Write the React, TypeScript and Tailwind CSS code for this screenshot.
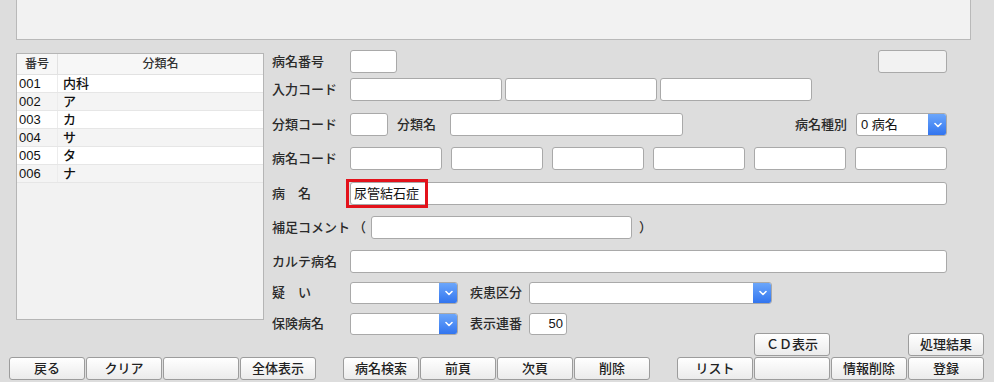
import React from 'react';

const FONT = '"Liberation Sans", "Noto Sans CJK JP", sans-serif';

function Field({ className = '', children }: { className?: string; children?: React.ReactNode }) {
    return (
        <div className={`h-[23px] bg-white border border-[#a9a9a9] rounded-[3px] flex items-center text-[13px] text-[#111] ${className}`}>
            {children}
        </div>
    );
}

function Select({ className = '', value = '' }: { className?: string; value?: string }) {
    return (
        <div className={`h-[23px] flex border border-[#a9a9a9] rounded-[3px] bg-white overflow-hidden ${className}`}>
            <div className="flex-1 flex items-center pl-[4px] text-[13px] text-[#111]">{value}</div>
            <div className="w-[19px] -my-px -mr-px rounded-r-[3px] bg-gradient-to-b from-[#6ea8fb] to-[#2f72ee] flex items-center justify-center">
                <svg width="8" height="6" viewBox="0 0 8 6" fill="none">
                    <path d="M1 1.5 L4 4.5 L7 1.5" stroke="white" strokeWidth="1.6" strokeLinecap="round" strokeLinejoin="round" />
                </svg>
            </div>
        </div>
    );
}

function Label({ className = '', children }: { className?: string; children: React.ReactNode }) {
    return <div className={`text-[13px] font-medium text-[#2a2a2a] whitespace-nowrap ${className}`}>{children}</div>;
}

function Btn({ children }: { children?: React.ReactNode }) {
    return (
        <button className="w-[76px] h-[23px] rounded-[3px] border border-[#9c9c9c] bg-gradient-to-b from-white to-[#ebebeb] text-[13px] font-medium text-[#222] flex items-center justify-center">
            {children}
        </button>
    );
}

const rows = [
    ['001', '内科'],
    ['002', 'ア'],
    ['003', 'カ'],
    ['004', 'サ'],
    ['005', 'タ'],
    ['006', 'ナ'],
];

export default function App() {
    return (
        <div className="w-[994px] h-[382px] bg-[#dddddd] overflow-hidden" style={{ fontFamily: FONT }}>
            {/* top panel */}
            <div className="ml-4 w-[955px] h-[40px] bg-[#f2f2f2] border-x border-b border-[#b9b9b9]" />

            <div className="flex h-[293px]">
                {/* category list */}
                <div className="ml-4 mt-[13px] w-[248px] h-[267px] border border-[#b5b5b5] bg-[#f2f2f2] flex flex-col">
                    <div className="flex h-[21px] bg-[#f7f7f7] border-b border-[#e2e2e2] text-[12px] font-medium text-[#333]">
                        <div className="w-[41px] border-r border-[#e2e2e2] flex items-center justify-center">番号</div>
                        <div className="flex-1 flex items-center justify-center">分類名</div>
                    </div>
                    {rows.map(([no, name], i) => (
                        <div
                            key={no}
                            className={`flex h-[18px] border-b border-[#e6e6e6] text-[13px] text-[#111] ${i % 2 === 0 ? 'bg-white' : 'bg-[#f4f4f4]'}`}
                        >
                            <div className="w-[41px] pl-[2px] border-r border-[#ececec] flex items-center">{no}</div>
                            <div className="flex-1 pl-[5px] flex items-center font-medium">{name}</div>
                        </div>
                    ))}
                </div>

                {/* form */}
                <div className="ml-2 w-[675px] flex flex-col">
                    <div className="mt-[10px] flex items-center">
                        <Label className="w-[78px]">病名番号</Label>
                        <Field className="w-[47px]" />
                        <div className="flex-1" />
                        <Field className="w-[69px] !bg-[#f2f2f2]" />
                    </div>

                    <div className="mt-[5px] flex items-center">
                        <Label className="w-[78px]">入力コード</Label>
                        <div className="flex gap-[3px]">
                            <Field className="w-[152px]" />
                            <Field className="w-[152px]" />
                            <Field className="w-[152px]" />
                        </div>
                    </div>

                    <div className="mt-[12px] flex items-center">
                        <Label className="w-[78px]">分類コード</Label>
                        <Field className="w-[38px]" />
                        <Label className="ml-[9px] w-[53px]">分類名</Label>
                        <Field className="w-[233px]" />
                        <div className="flex-1" />
                        <Label className="mr-[9px]">病名種別</Label>
                        <Select className="w-[91px]" value="0 病名" />
                    </div>

                    <div className="mt-[11px] flex items-center">
                        <Label className="w-[78px]">病名コード</Label>
                        <div className="flex gap-[9px]">
                            {[0, 1, 2, 3, 4, 5].map((k) => (
                                <Field key={k} className="w-[92px]" />
                            ))}
                        </div>
                    </div>

                    <div className="mt-[12px] flex items-center">
                        <Label className="w-[78px]">病　名</Label>
                        <div className="relative flex-1">
                            <Field className="pl-[3px]">尿管結石症</Field>
                            <div className="absolute left-[-4px] top-[-3px] w-[82px] h-[29px] border-[3px] border-[#e3121b]" />
                        </div>
                    </div>

                    <div className="mt-[11px] flex items-center">
                        <Label className="w-[78px]">補足コメント</Label>
                        <Label className="w-[21px] pl-[3px]">（</Label>
                        <Field className="w-[261px]" />
                        <Label className="ml-[7px]">）</Label>
                    </div>

                    <div className="mt-[11px] flex items-center">
                        <Label className="w-[78px]">カルテ病名</Label>
                        <Field className="flex-1" />
                    </div>

                    <div className="mt-[9px] flex items-center">
                        <Label className="w-[78px]">疑　い</Label>
                        <Select className="w-[108px] !h-[22px]" />
                        <Label className="ml-[12px] w-[59px]">疾患区分</Label>
                        <Select className="w-[243px] !h-[22px]" />
                    </div>

                    <div className="mt-[9px] flex items-center">
                        <Label className="w-[78px]">保険病名</Label>
                        <Select className="w-[108px] !h-[22px]" />
                        <Label className="ml-[12px] w-[59px]">表示連番</Label>
                        <Field className="w-[38px] !h-[22px] justify-end pr-[3px]">50</Field>
                    </div>
                </div>
            </div>

            {/* buttons */}
            <div className="flex h-[22px]">
                <div className="ml-[754px]">
                    <Btn>ＣＤ表示</Btn>
                </div>
                <div className="ml-[78px]">
                    <Btn>処理結果</Btn>
                </div>
            </div>
            <div className="mt-[2px] flex">
                <div className="ml-[9px] flex gap-[1px]">
                    <Btn>戻る</Btn>
                    <Btn>クリア</Btn>
                    <Btn />
                    <Btn>全体表示</Btn>
                </div>
                <div className="ml-[27px] flex gap-[1px]">
                    <Btn>病名検索</Btn>
                    <Btn>前頁</Btn>
                    <Btn>次頁</Btn>
                    <Btn>削除</Btn>
                </div>
                <div className="ml-[27px] flex gap-[1px]">
                    <Btn>リスト</Btn>
                    <Btn />
                    <Btn>情報削除</Btn>
                    <Btn>登録</Btn>
                </div>
            </div>
        </div>
    );
}
